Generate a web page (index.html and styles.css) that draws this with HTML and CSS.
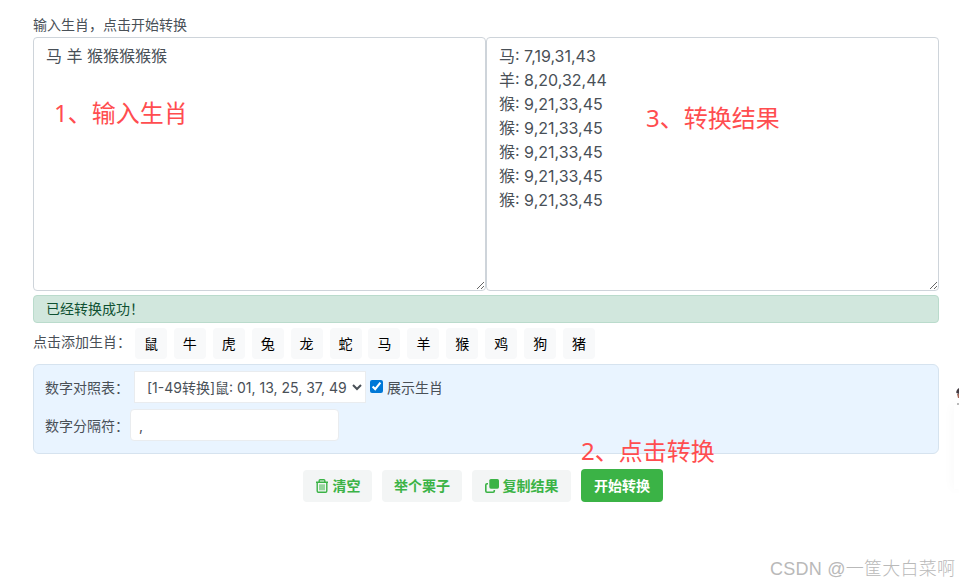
FILE: index.html
```html
<!DOCTYPE html>
<html lang="zh-CN">
<head>
  <meta charset="UTF-8">
  <meta name="viewport" content="width=device-width, initial-scale=1.0">
  <title>生肖转换</title>
  <link rel="stylesheet" href="styles.css">
</head>
<body>
  <div class="container">
    <label class="title" for="source">输入生肖，点击开始转换</label>
    <div class="editors">
      <textarea id="source" spellcheck="false">马 羊 猴猴猴猴猴</textarea>
      <textarea id="result" spellcheck="false">马: 7,19,31,43
羊: 8,20,32,44
猴: 9,21,33,45
猴: 9,21,33,45
猴: 9,21,33,45
猴: 9,21,33,45
猴: 9,21,33,45</textarea>
    </div>

    <div class="alert">已经转换成功！</div>

    <div class="animals">
      <span class="animals-label">点击添加生肖：</span>
      <button>鼠</button>
      <button>牛</button>
      <button>虎</button>
      <button>兔</button>
      <button>龙</button>
      <button>蛇</button>
      <button>马</button>
      <button>羊</button>
      <button>猴</button>
      <button>鸡</button>
      <button>狗</button>
      <button>猪</button>
    </div>

    <div class="options">
      <div class="row">
        <label class="row-label" for="table">数字对照表：</label>
        <select id="table">
          <option>[1-49转换]鼠: 01, 13, 25, 37, 49</option>
        </select>
        <input type="checkbox" id="show" checked>
        <label for="show">展示生肖</label>
      </div>
      <div class="row">
        <label class="row-label short" for="split">数字分隔符：</label>
        <input type="text" id="split" value=",">
      </div>
    </div>

    <div class="actions">
      <button class="btn btn-clear">
        <svg width="14" height="14" viewBox="0 0 14 14" fill="none" stroke="currentColor" stroke-width="1.4">
          <path d="M1 3.2h12M4.2 3V1.6q0-.9.9-.9h3.8q.9 0 .9.9V3M2.2 3.4v8.7q0 1.2 1.2 1.2h7.2q1.2 0 1.2-1.2V3.4"/>
          <path d="M5 5.3v6M7 5.3v6M9 5.3v6" stroke-width="1"/>
        </svg>
        清空
      </button>
      <button class="btn btn-demo">举个栗子</button>
      <button class="btn btn-copy">
        <svg width="14" height="14" viewBox="0 0 14 14">
          <rect x="4.3" y="0" width="9.7" height="9.7" rx="1.6" fill="currentColor"/>
          <path d="M3 4.7H2q-1.2 0-1.2 1.2V12q0 1.2 1.2 1.2h6.1q1.2 0 1.2-1.2v-1" fill="none" stroke="currentColor" stroke-width="1.6"/>
        </svg>
        复制结果
      </button>
      <button class="btn btn-start">开始转换</button>
    </div>
  </div>

  <div class="note note-input">1、输入生肖</div>
  <div class="note note-click">2、点击转换</div>
  <div class="note note-result">3、转换结果</div>

  <div class="side-panel"></div>
  <svg class="side-icon" width="3" height="19" viewBox="0 0 3 19">
    <path d="M3 1Q0 3 .3 6L3 7z" fill="#443b42"/>
    <path d="M1 7h2v4H2z" fill="#a4685a"/>
    <path d="M1 16.5h2v1H1z" fill="#777"/>
  </svg>
  <div class="watermark">CSDN @一筐大白菜啊</div>
</body>
</html>
```

FILE: styles.css
```css
* {
  box-sizing: border-box;
}

body {
  margin: 0;
  height: 586px;
  position: relative;
  overflow: hidden;
  background: #fff;
  color: #495057;
  font-family: Inter, "Noto Sans CJK SC", sans-serif;
  font-size: 14px;
  line-height: 21px;
}

button, input, select, textarea {
  font-family: inherit;
  margin: 0;
}

.container {
  width: 906px;
  margin-left: 33px;
  padding-top: 14px;
}

.title {
  display: block;
  height: 23px;
}

.editors {
  display: flex;
}

textarea {
  width: 453px;
  height: 254px;
  padding: 6px 12px;
  border: 1px solid #ced4da;
  border-radius: 4px;
  background: #fff;
  color: #495057;
  font-size: 16px;
  line-height: 24px;
  outline: none;
}

.alert {
  height: 28px;
  margin-top: 4px;
  padding: 0 12px;
  border: 1px solid #badbcc;
  border-radius: 4px;
  background: #d1e7dd;
  color: #0f5132;
  line-height: 26px;
}

.animals {
  display: flex;
  gap: 6.93px;
  height: 31px;
  margin-top: 5px;
}

.animals-label {
  width: 95px;
  line-height: 28px;
  white-space: nowrap;
}

.animals button {
  width: 32px;
  padding: 0;
  border: none;
  border-radius: 4px;
  background: #f8f9fa;
  color: #000;
  font-size: 14px;
  line-height: 31px;
}

.options {
  display: flex;
  flex-direction: column;
  gap: 6px;
  height: 90px;
  margin-top: 5px;
  padding: 6px 11px;
  border: 1px solid #d6e3ef;
  border-radius: 6px;
  background: #e9f4ff;
}

.row {
  display: flex;
  align-items: center;
  height: 32px;
}

.row-label {
  width: 89px;
  white-space: nowrap;
}

.row-label.short {
  width: 85px;
}

select, input[type="text"] {
  height: 32px;
  border: 1px solid #e9ecef;
  background: #fff;
  color: #495057;
  font-size: 14px;
}

select {
  width: 232px;
  padding: 0 0 0 8px;
}

input[type="text"] {
  width: 209px;
  padding: 0 8px;
  border-radius: 4px;
}

input[type="checkbox"] {
  width: 13px;
  height: 13px;
  margin: 0 4px 2px 4px;
  accent-color: #0078d7;
}

.actions {
  display: flex;
  justify-content: center;
  gap: 10px;
  margin-top: 15px;
  padding-right: 6px;
}

.btn {
  display: flex;
  align-items: center;
  justify-content: center;
  gap: 4px;
  height: 32px;
  margin-top: 1px;
  padding: 0 0 2px;
  border: none;
  border-radius: 4px;
  background: #f3f5f5;
  color: #3bb346;
  font-size: 14px;
  font-weight: 700;
}

.btn svg {
  position: relative;
  top: 1px;
}

.btn-clear {
  width: 69px;
}

.btn-demo {
  width: 80px;
}

.btn-copy {
  width: 99px;
}

.btn-start {
  width: 82px;
  height: 33px;
  margin-top: 0;
  background: #3bb346;
  color: #fff;
}

/* red step notes over the page */
.note {
  position: absolute;
  color: #ff4d4f;
  font-family: "Noto Sans", "Noto Sans CJK SC", sans-serif;
  font-size: 24px;
  line-height: 32px;
  white-space: nowrap;
}

.note-input {
  left: 54px;
  top: 97px;
}

.note-click {
  left: 581px;
  top: 435px;
}

.note-result {
  left: 646px;
  top: 102px;
}

.side-panel {
  position: absolute;
  left: 954px;
  top: 405px;
  width: 5px;
  height: 84px;
  background: #fff;
  box-shadow: 0 0 12px rgba(0, 0, 0, 0.05);
}

.side-icon {
  position: absolute;
  left: 956px;
  top: 387px;
}

.watermark {
  position: absolute;
  left: 770px;
  top: 557px;
  color: #b9b9b9;
  font-family: "Liberation Sans", "Noto Sans CJK SC", sans-serif;
  font-size: 18px;
  font-weight: 300;
  line-height: 24px;
  letter-spacing: 0.25px;
  white-space: nowrap;
}
```
